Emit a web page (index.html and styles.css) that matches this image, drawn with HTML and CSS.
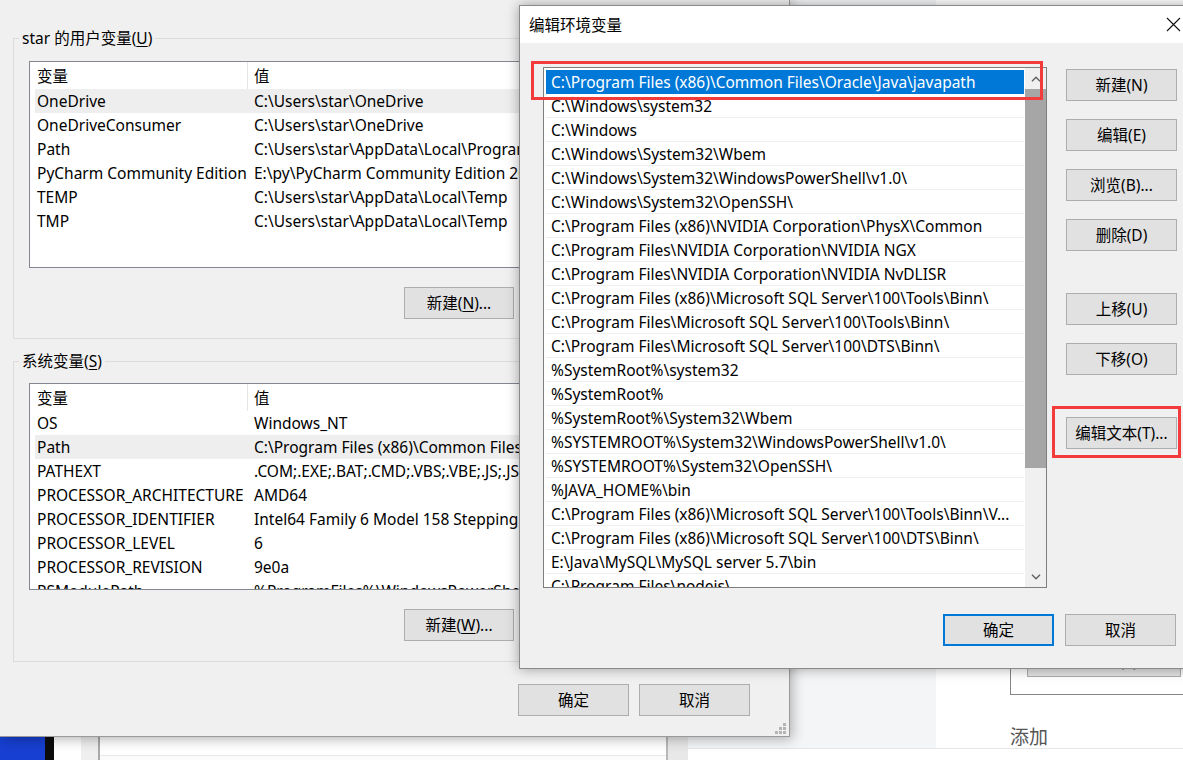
FILE: index.html
```html
<!doctype html>
<html>
<head>
<meta charset="utf-8">
<title>编辑环境变量</title>
<link rel="stylesheet" href="styles.css">
</head>
<body>
<div class="desk">

	<!-- window far behind, right side -->
	<div class="app">
		<div class="app-side"></div>
		<div class="app-main">
			<div class="app-box"><a href="javascript:;" class="btn app-btn">编辑文本(T)...</a></div>
			<p class="app-add">添加</p>
		</div>
		<div class="app-foot"></div>
	</div>

	<!-- strip of the window under the left dialog -->
	<div class="strip">
		<i class="s-blue"></i><i class="s-dark"></i><i class="s-light"></i><i class="s-gray"></i><i class="s-page"></i><i class="s-col"></i>
	</div>

	<!-- 环境变量 -->
	<div class="env">
		<fieldset class="group">
			<legend>star 的用户变量(<u>U</u>)</legend>
			<div class="vars">
				<div class="vars-head"><span>变量</span><span>值</span></div>
				<div class="vars-row hot"><span>OneDrive</span><span>C:\Users\star\OneDrive</span></div>
				<div class="vars-row"><span>OneDriveConsumer</span><span>C:\Users\star\OneDrive</span></div>
				<div class="vars-row"><span>Path</span><span>C:\Users\star\AppData\Local\Programs\Python\Python37\Scripts\;C:\Users\star\AppData\Local\Programs\Python\Python37\</span></div>
				<div class="vars-row"><span>PyCharm Community Edition</span><span>E:\py\PyCharm Community Edition 2019.3.3\bin;</span></div>
				<div class="vars-row"><span>TEMP</span><span>C:\Users\star\AppData\Local\Temp</span></div>
				<div class="vars-row"><span>TMP</span><span>C:\Users\star\AppData\Local\Temp</span></div>
			</div>
			<div class="group-btns">
				<a href="javascript:;" class="btn">新建(<u>N</u>)...</a>
				<a href="javascript:;" class="btn">编辑(<u>E</u>)...</a>
				<a href="javascript:;" class="btn">删除(<u>D</u>)</a>
			</div>
		</fieldset>
		<fieldset class="group group-sys">
			<legend>系统变量(<u>S</u>)</legend>
			<div class="vars">
				<div class="vars-head"><span>变量</span><span>值</span></div>
				<div class="vars-row"><span>OS</span><span>Windows_NT</span></div>
				<div class="vars-row hot"><span>Path</span><span>C:\Program Files (x86)\Common Files\Oracle\Java\javapath;C:\Windows\system32;C:\Windows</span></div>
				<div class="vars-row"><span>PATHEXT</span><span>.COM;.EXE;.BAT;.CMD;.VBS;.VBE;.JS;.JSE;.WSF;.WSH;.MSC</span></div>
				<div class="vars-row"><span>PROCESSOR_ARCHITECTURE</span><span>AMD64</span></div>
				<div class="vars-row"><span>PROCESSOR_IDENTIFIER</span><span>Intel64 Family 6 Model 158 Stepping 10, GenuineIntel</span></div>
				<div class="vars-row"><span>PROCESSOR_LEVEL</span><span>6</span></div>
				<div class="vars-row"><span>PROCESSOR_REVISION</span><span>9e0a</span></div>
				<div class="vars-row"><span>PSModulePath</span><span>%ProgramFiles%\WindowsPowerShell\Modules;C:\Windows\system32\WindowsPowerShell\v1.0\Modules</span></div>
			</div>
			<div class="group-btns">
				<a href="javascript:;" class="btn">新建(<u>W</u>)...</a>
				<a href="javascript:;" class="btn">编辑(<u>I</u>)...</a>
				<a href="javascript:;" class="btn">删除(<u>L</u>)</a>
			</div>
		</fieldset>
		<div class="env-foot">
			<a href="javascript:;" class="btn">确定</a>
			<a href="javascript:;" class="btn">取消</a>
		</div>
		<svg class="grip" width="11" height="11" viewBox="0 0 11 11"><g fill="#b4b4b4"><rect x="8" y="0" width="3" height="3"/><rect x="4" y="4" width="3" height="3"/><rect x="8" y="4" width="3" height="3"/><rect x="0" y="8" width="3" height="3"/><rect x="4" y="8" width="3" height="3"/><rect x="8" y="8" width="3" height="3"/></g></svg>
	</div>

	<!-- 编辑环境变量 -->
	<div class="edit">
		<div class="edit-title">
			<span>编辑环境变量</span>
			<a href="javascript:;" class="edit-close"><svg width="15" height="15" viewBox="0 0 15 15"><path d="M1 1L14 14M14 1L1 14" stroke="#111" stroke-width="1.1" fill="none"/></svg></a>
		</div>
		<div class="edit-body">
			<div class="edit-main">
				<div class="paths">
					<div class="paths-rows">
						<p class="cur">C:\Program Files (x86)\Common Files\Oracle\Java\javapath</p>
						<p>C:\Windows\system32</p>
						<p>C:\Windows</p>
						<p>C:\Windows\System32\Wbem</p>
						<p>C:\Windows\System32\WindowsPowerShell\v1.0\</p>
						<p>C:\Windows\System32\OpenSSH\</p>
						<p>C:\Program Files (x86)\NVIDIA Corporation\PhysX\Common</p>
						<p>C:\Program Files\NVIDIA Corporation\NVIDIA NGX</p>
						<p>C:\Program Files\NVIDIA Corporation\NVIDIA NvDLISR</p>
						<p>C:\Program Files (x86)\Microsoft SQL Server\100\Tools\Binn\</p>
						<p>C:\Program Files\Microsoft SQL Server\100\Tools\Binn\</p>
						<p>C:\Program Files\Microsoft SQL Server\100\DTS\Binn\</p>
						<p>%SystemRoot%\system32</p>
						<p>%SystemRoot%</p>
						<p>%SystemRoot%\System32\Wbem</p>
						<p>%SYSTEMROOT%\System32\WindowsPowerShell\v1.0\</p>
						<p>%SYSTEMROOT%\System32\OpenSSH\</p>
						<p>%JAVA_HOME%\bin</p>
						<p>C:\Program Files (x86)\Microsoft SQL Server\100\Tools\Binn\V...</p>
						<p>C:\Program Files (x86)\Microsoft SQL Server\100\DTS\Binn\</p>
						<p>E:\Java\MySQL\MySQL server 5.7\bin</p>
						<p>C:\Program Files\nodejs\</p>
					</div>
					<div class="scroll">
						<span class="sb-arrow"><svg width="10" height="6" viewBox="0 0 10 6"><path d="M1 5.3L5 1.3L9 5.3" stroke="#606060" stroke-width="1.4" fill="none"/></svg></span>
						<span class="sb-thumb"></span>
						<span class="sb-track"></span>
						<span class="sb-arrow"><svg width="10" height="6" viewBox="0 0 10 6"><path d="M1 0.7L5 4.7L9 0.7" stroke="#606060" stroke-width="1.4" fill="none"/></svg></span>
					</div>
				</div>
				<div class="edit-side">
					<a href="javascript:;" class="btn">新建(N)</a>
					<a href="javascript:;" class="btn">编辑(E)</a>
					<a href="javascript:;" class="btn">浏览(B)...</a>
					<a href="javascript:;" class="btn">删除(D)</a>
					<a href="javascript:;" class="btn gap">上移(U)</a>
					<a href="javascript:;" class="btn">下移(O)</a>
					<a href="javascript:;" class="btn gap">编辑文本(T)...</a>
				</div>
			</div>
			<div class="edit-foot">
				<a href="javascript:;" class="btn ok">确定</a>
				<a href="javascript:;" class="btn">取消</a>
			</div>
		</div>
	</div>

	<!-- red marks drawn over the screenshot -->
	<div class="mark mark-list"></div>
	<div class="mark mark-btn"></div>
</div>
</body>
</html>
```

FILE: styles.css
```css
*{margin:0;padding:0;box-sizing:border-box}
body{width:1183px;height:760px;overflow:hidden;background:#fff;font:15.5px/24px "Noto Sans","Noto Sans CJK SC",sans-serif;color:#000}
a{color:#000;text-decoration:none}
u{text-decoration:underline;text-underline-offset:2px;text-decoration-thickness:1px}
.desk{position:relative;width:1183px;height:760px;overflow:hidden}

.btn{display:flex;align-items:center;justify-content:center;height:32px;background:#e1e1e1;border:1px solid #adadad;white-space:nowrap;flex:none}

/* back window */
.app{position:absolute;left:688px;top:0;width:495px;height:760px;display:grid;grid-template-columns:248px 1fr;grid-template-rows:748px 1fr}
.app-side{background:#f4f5f7}
.app-main{background:#fff;padding:600px 0 0 74px;overflow:hidden}
.app-box{width:200px;height:95px;border:1px solid #858585;display:flex;align-items:flex-end;padding:0 0 17px 16px}
.app-btn{width:154px}
.app-add{margin-top:32px;font-size:19px;line-height:20px;color:#555}
.app-foot{grid-column:1/3;border-top:1px solid #e6e6e6;background:#fff}

.strip{position:absolute;left:0;top:736px;width:688px;height:24px;display:flex}
.strip i{display:block;height:100%;flex:none}
.s-blue{width:45px;background:#1740d2}
.s-dark{width:9px;background:#0c0c0c}
.s-light{width:27px;background:#fff}
.s-gray{width:19px;background:#efefef;border-right:2px solid #a9a9a9}
.s-page{width:566px;background:linear-gradient(#fff 19px,#e8e8e8 19px,#e8e8e8 20px,#fbfbfb 20px)}
.strip .s-col{flex:1;background:#e8e8e8;border-left:2px solid #b8b8b8}

/* 环境变量 dialog */
.env{position:absolute;left:0;top:0;width:790px;height:737px;background:#f0f0f0;border-right:1px solid #9a9a9a;border-bottom:1px solid #9a9a9a;box-shadow:2px 2px 12px rgba(0,0,0,.3);padding-top:28px}
.group{margin-left:13px;width:758px;border:1px solid #dcdcdc;padding:13px 16px 19px 15px;min-width:0}
.group legend{margin-left:-10px;padding:0 3px;line-height:20px}
.group-sys{margin-top:12px;padding-top:12px;padding-bottom:20px}
.vars{height:207px;border:1px solid #828790;background:#fff;overflow:hidden}
.vars-head,.vars-row{display:grid;grid-template-columns:213px 1fr;margin-left:5px;white-space:nowrap}
.vars-head{height:27px;line-height:28px}
.vars-head span:first-child{border-right:1px solid #e5e5e5}
.vars-row{height:24px}
.vars span{padding-left:2px;overflow:hidden}
.vars span+span{padding-left:6px}
.vars-row.hot{background:#eeeeee}
.group-btns{display:flex;justify-content:flex-end;gap:10px;margin-top:19px}
.group-btns .btn{width:110px}
.env-foot{display:flex;justify-content:flex-end;gap:10px;margin-top:22px;padding-right:39px}
.env-foot .btn{width:111px}
.grip{position:absolute;right:3px;bottom:2px}

/* 编辑环境变量 dialog */
.edit{position:absolute;left:519px;top:5px;width:681px;height:664px;background:#f0f0f0;border:1px solid #8a8a8a;box-shadow:0 0 12px rgba(0,0,0,.35);display:flex;flex-direction:column}
.edit-title{height:37px;background:#fff;display:flex;align-items:center;justify-content:space-between;padding-left:9px;flex:none}
.edit-close{width:46px;height:37px;display:flex;align-items:center;justify-content:center;margin-right:3px}
.edit-body{padding:24px 22px 0 23px}
.edit-main{display:grid;grid-template-columns:504px 111px;column-gap:19px}
.paths{height:521px;border:1px solid #7e7e7e;background:#fff;display:flex;overflow:hidden}
.paths-rows{flex:1;padding:2px 1px 0 2px;overflow:hidden;min-width:0}
.paths-rows p{height:24px;line-height:24px;padding-left:5px;white-space:nowrap;overflow:hidden;text-overflow:ellipsis;box-shadow:inset 0 -1px 0 #eeeeee}
.paths-rows p.cur{background:#0078d7;color:#fff;box-shadow:none}
.scroll{width:21px;background:#f0f0f0;display:flex;flex-direction:column;flex:none}
.sb-arrow{height:21px;display:flex;align-items:center;justify-content:center;flex:none}
.sb-thumb{height:379px;background:#a6a6a6;flex:none}
.sb-track{flex:1}
.edit-side{display:flex;flex-direction:column;gap:18px;padding-top:2px}
.edit-side .gap{margin-top:24px}
.edit-foot{display:flex;justify-content:flex-end;gap:11px;margin-top:26px;padding-right:1px}
.edit-foot .btn{width:111px}
.edit-foot .ok{border:2px solid #0078d7}

/* red annotation boxes */
.mark{position:absolute;border:3px solid #f43b3b}
.mark-list{left:531px;top:61px;width:512px;height:39px}
.mark-btn{left:1052px;top:406px;width:129px;height:52px}
```
